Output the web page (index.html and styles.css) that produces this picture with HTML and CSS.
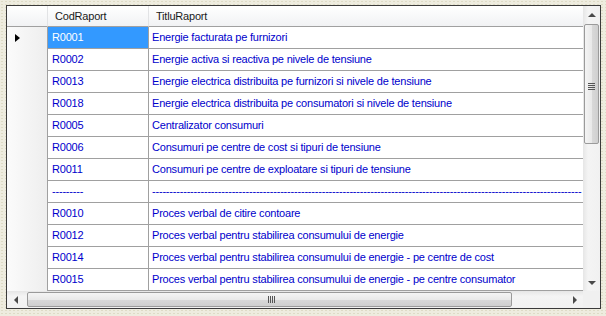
FILE: index.html
```html
<!DOCTYPE HTML>
<html>

<head>
    <meta charset="utf-8">
    <link rel="stylesheet" href="styles.css">
</head>

<body>
    <div id="grid">
        <div class="main">
            <div class="rows">
                <div class="row head">
                    <div class="rh"></div>
                    <div class="c1">CodRaport</div>
                    <div class="c2">TitluRaport</div>
                </div>
                <div class="row">
                    <div class="rh"><span class="cur"></span></div>
                    <div class="c1 sel">R0001</div>
                    <div class="c2">Energie facturata pe furnizori</div>
                </div>
                <div class="row">
                    <div class="rh"></div>
                    <div class="c1">R0002</div>
                    <div class="c2">Energie activa si reactiva pe nivele de tensiune</div>
                </div>
                <div class="row">
                    <div class="rh"></div>
                    <div class="c1">R0013</div>
                    <div class="c2">Energie electrica distribuita pe furnizori si nivele de tensiune</div>
                </div>
                <div class="row">
                    <div class="rh"></div>
                    <div class="c1">R0018</div>
                    <div class="c2">Energie electrica distribuita pe consumatori si nivele de tensiune</div>
                </div>
                <div class="row">
                    <div class="rh"></div>
                    <div class="c1">R0005</div>
                    <div class="c2">Centralizator consumuri</div>
                </div>
                <div class="row">
                    <div class="rh"></div>
                    <div class="c1">R0006</div>
                    <div class="c2">Consumuri pe centre de cost si tipuri de tensiune</div>
                </div>
                <div class="row">
                    <div class="rh"></div>
                    <div class="c1">R0011</div>
                    <div class="c2">Consumuri pe centre de exploatare si tipuri de tensiune</div>
                </div>
                <div class="row">
                    <div class="rh"></div>
                    <div class="c1">---------</div>
                    <div class="c2">----------------------------------------------------------------------------------------------------------------------------</div>
                </div>
                <div class="row">
                    <div class="rh"></div>
                    <div class="c1">R0010</div>
                    <div class="c2">Proces verbal de citire contoare</div>
                </div>
                <div class="row">
                    <div class="rh"></div>
                    <div class="c1">R0012</div>
                    <div class="c2">Proces verbal pentru stabilirea consumului de energie</div>
                </div>
                <div class="row">
                    <div class="rh"></div>
                    <div class="c1">R0014</div>
                    <div class="c2">Proces verbal pentru stabilirea consumului de energie - pe centre de cost</div>
                </div>
                <div class="row">
                    <div class="rh"></div>
                    <div class="c1">R0015</div>
                    <div class="c2">Proces verbal pentru stabilirea consumului de energie - pe centre consumator</div>
                </div>
            </div>
            <div class="vscroll">
                <div class="btn"><span class="arr up"></span></div>
                <div class="track">
                    <div class="thumb vthumb"><span class="grip-h"></span></div>
                </div>
                <div class="btn"><span class="arr down"></span></div>
            </div>
        </div>
        <div class="hscroll">
            <div class="btn"><span class="arr left"></span></div>
            <div class="track">
                <div class="thumb hthumb"><span class="grip-v"></span></div>
            </div>
            <div class="btn"><span class="arr right"></span></div>
            <div class="corner"></div>
        </div>
    </div>
</body>

</html>
```

FILE: styles.css
```css
body {
    margin: 0;
    width: 606px;
    height: 316px;
    overflow: hidden;
    background-color: #eeecdf;
    background-image: radial-gradient(#dedbc6 0.8px, transparent 1px);
    background-size: 4px 3px;
    font-family: "Liberation Sans", Arial, sans-serif;
    font-size: 11px;
    letter-spacing: -0.2px;
    padding: 5px 0 0 6px;
    box-sizing: border-box;
}

#grid {
    width: 595px;
    height: 304px;
    border: 1px solid #3a3a3a;
    box-sizing: border-box;
    background: #fff;
    display: flex;
    flex-direction: column;
}

.main {
    display: flex;
    height: 285px;
}

.rows {
    width: 576px;
    overflow: hidden;
}

.row {
    display: flex;
    height: 22px;
}
.row > div {
    height: 22px;
    box-sizing: border-box;
    line-height: 21px;
    white-space: nowrap;
    overflow: hidden;
}

.rh {
    width: 41px;
    flex: none;
    border-right: 1px solid #a0a0a0;
    background: linear-gradient(to right, #fbfbfb, #eeeeee);
    position: relative;
}
.c1 {
    width: 101px;
    flex: none;
    padding-left: 4px;
    border-right: 1px solid #a0a0a0;
    border-bottom: 1px solid #a0a0a0;
    color: #0000cc;
}
.c2 {
    flex: 1;
    padding-left: 3px;
    border-bottom: 1px solid #a0a0a0;
    color: #0000cc;
}
.c1.sel {
    background: #3399ff;
    color: #fff;
}

.row.head {
    height: 21px;
}
.row.head > div {
    height: 21px;
    line-height: 20px;
    color: #1a1a1a;
    background: linear-gradient(#ffffff, #f1f2f4);
    border-bottom: 1px solid #a0a0a0;
}
.row.head .c1 {
    padding-left: 7px;
    border-right: 1px solid #e2e3e5;
}
.row.head .c2 {
    padding-left: 7px;
}
.row.head .rh {
    border-right: 1px solid #e2e3e5;
}

/* current row marker */
.cur {
    position: absolute;
    left: 8px;
    top: 7px;
    width: 0;
    height: 0;
    border-top: 4px solid transparent;
    border-bottom: 4px solid transparent;
    border-left: 5px solid #000;
}

/* scrollbars */
.vscroll {
    width: 17px;
    display: flex;
    flex-direction: column;
    background: linear-gradient(to right, #e6e6e6, #f4f4f4 30%, #f1f1f1);
}
.hscroll {
    height: 17px;
    display: flex;
    background: linear-gradient(#e6e6e6, #f4f4f4 30%, #f1f1f1);
}
.btn {
    width: 17px;
    height: 17px;
    flex: none;
    display: flex;
    align-items: center;
    justify-content: center;
}
.track {
    flex: 1;
    position: relative;
}
.vscroll .track {
    padding: 1px 0;
}
.hscroll .track {
    padding: 0 1px;
}
.corner {
    width: 17px;
    height: 17px;
    background: #f0f0f0;
}

.thumb {
    box-sizing: border-box;
    border: 1px solid #9a9a9a;
    border-radius: 2px;
    display: flex;
    align-items: center;
    justify-content: center;
}
.vthumb {
    margin: 0 1px 0 1px;
    height: 120px;
    background: linear-gradient(to right, #f4f4f4, #e9e9e9 50%, #d9d9d9 51%, #cfcfcf);
}
.hthumb {
    margin: 1px 0 0 2px;
    width: 485px;
    height: 15px;
    background: linear-gradient(#f4f4f4, #e9e9e9 50%, #d9d9d9 51%, #cfcfcf);
}

.grip-h {
    width: 7px;
    height: 1px;
    background: #555;
    box-shadow: 0 2px 0 #555, 0 4px 0 #555, 0 -2px 0 #555;
    margin-top: 2px;
}
.grip-v {
    width: 1px;
    height: 7px;
    background: #555;
    box-shadow: 2px 0 0 #555, 4px 0 0 #555, -2px 0 0 #555;
    margin-left: 2px;
}

.arr {
    width: 0;
    height: 0;
}
.arr.up {
    border-left: 4px solid transparent;
    border-right: 4px solid transparent;
    border-bottom: 4px solid #4a4a4a;
}
.arr.down {
    border-left: 4px solid transparent;
    border-right: 4px solid transparent;
    border-top: 4px solid #4a4a4a;
}
.arr.left {
    border-top: 4px solid transparent;
    border-bottom: 4px solid transparent;
    border-right: 4px solid #4a4a4a;
}
.arr.right {
    border-top: 4px solid transparent;
    border-bottom: 4px solid transparent;
    border-left: 4px solid #4a4a4a;
}
```
